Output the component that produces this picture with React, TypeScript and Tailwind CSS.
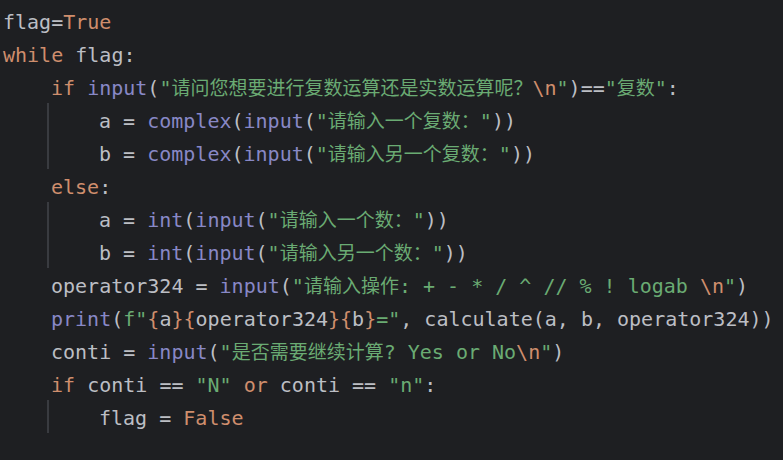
import React from "react";

type Tok = [string, string];

const D = "text-[#bcbec4]";
const K = "text-[#cf8e6d]";
const B = "text-[#8888c6]";
const S = "text-[#6aab73]";

const CJK = /([\u3000-\u303f\u4e00-\u9fff\uff00-\uffef]+)/;

function renderText(text: string, cls: string, key: number) {
  const parts = text.split(CJK).filter((p) => p.length > 0);
  return (
    <span key={key} className={cls}>
      {parts.map((p, i) =>
        CJK.test(p) ? (
          <span
            key={i}
            className="text-[19px]"
            style={{ fontFamily: '"Noto Sans CJK SC", sans-serif' }}
          >
            {p}
          </span>
        ) : (
          <span key={i}>{p}</span>
        )
      )}
    </span>
  );
}

const lines: { depth: number; toks: Tok[] }[] = [
  { depth: 0, toks: [["flag=", D], ["True", K]] },
  { depth: 0, toks: [["while", K], [" flag:", D]] },
  {
    depth: 1,
    toks: [
      ["if", K],
      [" ", D],
      ["input", B],
      ["(", D],
      ['"请问您想要进行复数运算还是实数运算呢？', S],
      ["\\n", K],
      ['"', S],
      [")==", D],
      ['"复数"', S],
      [":", D],
    ],
  },
  {
    depth: 2,
    toks: [
      ["a = ", D],
      ["complex", B],
      ["(", D],
      ["input", B],
      ["(", D],
      ['"请输入一个复数："', S],
      ["))", D],
    ],
  },
  {
    depth: 2,
    toks: [
      ["b = ", D],
      ["complex", B],
      ["(", D],
      ["input", B],
      ["(", D],
      ['"请输入另一个复数："', S],
      ["))", D],
    ],
  },
  { depth: 1, toks: [["else", K], [":", D]] },
  {
    depth: 2,
    toks: [
      ["a = ", D],
      ["int", B],
      ["(", D],
      ["input", B],
      ["(", D],
      ['"请输入一个数："', S],
      ["))", D],
    ],
  },
  {
    depth: 2,
    toks: [
      ["b = ", D],
      ["int", B],
      ["(", D],
      ["input", B],
      ["(", D],
      ['"请输入另一个数："', S],
      ["))", D],
    ],
  },
  {
    depth: 1,
    toks: [
      ["operator324 = ", D],
      ["input", B],
      ["(", D],
      ['"请输入操作: + - * / ^ // % ! logab ', S],
      ["\\n", K],
      ['"', S],
      [")", D],
    ],
  },
  {
    depth: 1,
    toks: [
      ["print", B],
      ["(", D],
      ['f"', S],
      ["{", K],
      ["a", D],
      ["}{", K],
      ["operator324", D],
      ["}{", K],
      ["b", D],
      ["}", K],
      ['="', S],
      [", calculate(a, b, operator324))", D],
    ],
  },
  {
    depth: 1,
    toks: [
      ["conti = ", D],
      ["input", B],
      ["(", D],
      ['"是否需要继续计算? Yes or No', S],
      ["\\n", K],
      ['"', S],
      [")", D],
    ],
  },
  {
    depth: 1,
    toks: [
      ["if", K],
      [" conti == ", D],
      ['"N"', S],
      [" ", D],
      ["or", K],
      [" conti == ", D],
      ['"n"', S],
      [":", D],
    ],
  },
  { depth: 2, toks: [["flag = ", D], ["False", K]] },
];

export default function App() {
  return (
    <div
      className="w-[783px] h-[460px] bg-[#1e1f22] overflow-hidden pt-[4px] pl-[3px] text-[20px] leading-[33px]"
      style={{ fontFamily: '"DejaVu Sans Mono", "Noto Sans CJK SC", monospace' }}
    >
      {lines.map((ln, i) => {
        const hasCjk = ln.toks.some((t) => CJK.test(t[0]));
        return (
          <div key={i} className="flex h-[33px] whitespace-pre">
            {Array.from({ length: ln.depth }).map((_, k) => (
              <div key={k} className="flex w-[48px] shrink-0 justify-end pr-[2px]">
                {k <= ln.depth - 2 ? (
                  <div className="w-[2px] h-full bg-[#393b40]" />
                ) : null}
              </div>
            ))}
            <div className={hasCjk ? "whitespace-pre" : "whitespace-pre pt-[2px]"}>
              {ln.toks.map((t, j) => renderText(t[0], t[1], j))}
            </div>
          </div>
        );
      })}
    </div>
  );
}
